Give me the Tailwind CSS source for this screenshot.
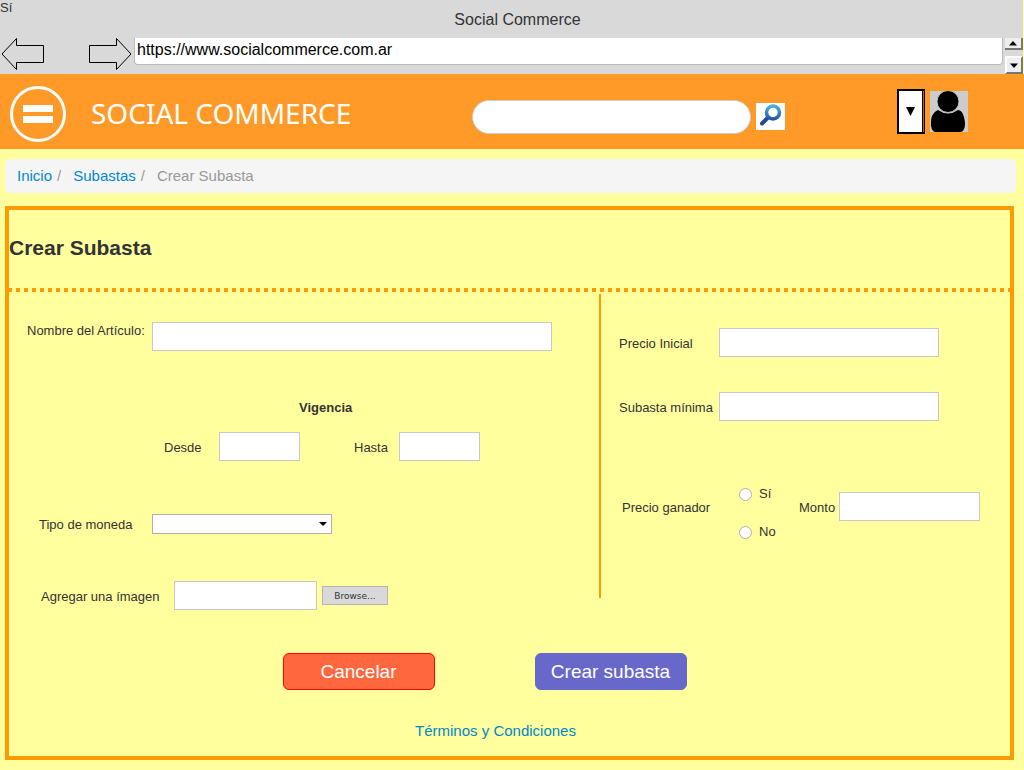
<!DOCTYPE html>
<html lang="es">
<head>
<meta charset="utf-8">
<meta name="viewport" content="width=device-width, initial-scale=1">
<title>Social Commerce</title>
<script src="https://cdn.jsdelivr.net/npm/@tailwindcss/browser@4"></script>
</head>
<body class="min-h-screen bg-[#ffff9e] font-['Liberation_Sans',Arial,sans-serif] text-[13px] leading-4 text-[#333333]">
  <!-- Browser bar -->
  <header class="mr-px h-[74px] bg-[#d9d9d9]">
    <div class="grid h-[38px] grid-cols-[1fr_auto_1fr]">
      <span>Sí</span>
      <p class="pt-2.5 pl-3 text-base leading-5">Social Commerce</p>
    </div>
    <div class="flex items-start">
      <button type="button" aria-label="Atrás" class="w-[88px] pl-px">
        <svg width="44" height="33" viewBox="0 0 44 33" fill="none" stroke="#000"><path d="M1 16 15.500 .5V7.500H42.500V24.500H15.500V31.500Z"/></svg>
      </button>
      <button type="button" aria-label="Adelante" class="w-[46px]">
        <svg width="44" height="33" viewBox="0 0 44 33" fill="none" stroke="#000"><path d="M43 16 28.500 .5V7.500H1.500V24.500H28.500V31.500Z"/></svg>
      </button>
      <input type="text" aria-label="Dirección" value="https://www.socialcommerce.com.ar" class="h-[27px] min-w-0 flex-1 rounded-b border border-t-0 border-[#bbbbbb] bg-white px-0.5 pb-0.5 text-base text-black">
      <div class="ml-0.5 flex h-9 w-[18px] flex-col justify-between">
        <button type="button" aria-label="Subir" class="flex h-3 items-center justify-center border-r-2 border-b-2 border-[#777777] bg-[#eeeeee]"><svg width="8" height="5"><path d="M0 4.500 4 0 8 4.500Z"/></svg></button>
        <button type="button" aria-label="Bajar" class="flex h-[18px] items-center justify-center border-2 border-t-white border-r-[#777777] border-b-[#777777] border-l-white bg-[#eeeeee]"><svg width="8" height="5"><path d="M0 .5 4 5 8 .5Z"/></svg></button>
      </div>
    </div>
  </header>

  <!-- Site bar -->
  <div class="flex h-[75px] items-center bg-[#ff9a28]">
    <button type="button" aria-label="Menú" class="ml-[9px] mt-1">
      <svg width="58" height="58" viewBox="0 0 58 58"><circle cx="29" cy="29" r="26.500" fill="none" stroke="#fff" stroke-width="3"/><path d="M14 20h30v7H14zM14 31h30v7H14z" fill="#fff"/></svg>
    </button>
    <div class="flex-1 pl-6 pt-0.5 font-['Comic_Sans_MS','Noto_Sans',sans-serif] text-[28px] leading-9 text-white">SOCIAL COMMERCE</div>
    <form class="mt-2.5 flex items-center gap-[5px]">
      <input type="search" aria-label="Buscar" class="h-[34px] w-[279px] rounded-full border border-[#cccccc] bg-white px-4">
      <button type="button" aria-label="Buscar" class="h-[27px] w-[29px] bg-white">
        <svg width="29" height="27" viewBox="0 0 29 27" fill="none">
          <defs><linearGradient id="lens" x1="0" y1="0" x2="0" y2="1"><stop stop-color="#45b5dd"/><stop offset="1" stop-color="#2956ad"/></linearGradient></defs>
          <path d="m12 14.500-6 6" stroke="#234a97" stroke-width="4" stroke-linecap="round"/>
          <circle cx="17" cy="9.500" r="6.500" stroke="url(#lens)" stroke-width="3.500"/>
        </svg>
      </button>
    </form>
    <div class="ml-28 mr-14 flex items-center gap-[5px]">
      <button type="button" aria-label="Opciones" class="flex h-[45px] w-7 items-center justify-center border-2 border-r border-black bg-[#b06010] pr-px"><span class="flex h-full flex-1 items-center justify-center border-r border-black bg-white"><svg width="9" height="9"><path d="M0 0H9L4.500 9Z"/></svg></span></button>
      <svg role="img" aria-label="Usuario" width="38" height="41" viewBox="0 0 38 41"><path fill="#ccc" d="M0 0h38v41H0z"/><path d="M8 19Q18 26 28 19Q32 19 34 26Q36 34 34 38Q33 41 30 41H6Q2 41 1 35Q0 22 8 19Z"/><circle cx="18" cy="10.500" r="11" stroke="#ccc"/></svg>
    </div>
  </div>

  <!-- Breadcrumb -->
  <nav aria-label="Ruta" class="ml-[5px] mr-2 mt-2.5 flex h-[34px] items-center rounded-md bg-[#f5f5f5] pl-3 text-[15px] text-[#999999]">
    <a href="#" class="text-[#0088cc]">Inicio</a><span class="pl-[5px] pr-3">/</span>
    <a href="#" class="text-[#0088cc]">Subastas</a><span class="pl-[5px] pr-3">/</span>
    <span>Crear Subasta</span>
  </nav>

  <main class="mb-2.5 ml-[5px] mr-2.5 mt-[13px] border-4 border-[#ff9a00]">
    <h1 class="pt-[26px] pb-[28px] text-[21px] font-bold leading-6">Crear Subasta</h1>
    <div class="h-1 bg-[repeating-linear-gradient(90deg,#ff9a00_0px,#ff9a00_3px,transparent_3px,transparent_7px,#ff9a00_7px,#ff9a00_8px)]"></div>
    <form>
      <div class="grid grid-cols-[590fr_411fr] pt-0.5">
        <div class="pt-7">
          <div class="flex">
            <label for="nombre" class="w-[143px] shrink-0 pl-[18px] pt-px">Nombre del Artículo:</label>
            <input id="nombre" type="text" class="h-[29px] w-[400px] border border-[#c8c8c8] bg-white px-2">
          </div>
          <fieldset class="mt-12 pl-[155px]">
            <legend class="pl-[135px] pt-px font-bold">Vigencia</legend>
            <div class="mt-4 flex items-center">
              <label for="desde" class="w-[55px] pt-0.5">Desde</label>
              <input id="desde" type="text" class="h-[29px] w-[81px] border border-[#c8c8c8] bg-white px-2">
              <label for="hasta" class="ml-[54px] w-[45px] pt-0.5">Hasta</label>
              <input id="hasta" type="text" class="h-[29px] w-[81px] border border-[#c8c8c8] bg-white px-2">
            </div>
          </fieldset>
          <div class="mt-[53px] flex items-center pl-[30px]">
            <label for="moneda" class="w-[113px] pt-0.5">Tipo de moneda</label>
            <div class="relative">
              <select id="moneda" class="block h-5 w-[180px] appearance-none border border-[#b0b0b0] bg-white px-1"><option></option></select>
              <svg class="pointer-events-none absolute right-[5px] top-2" width="8" height="4"><path d="M0 0H8L4 4Z"/></svg>
            </div>
          </div>
          <div class="mt-[47px] flex items-center pl-8">
            <label for="imagen" class="w-[133px] pt-0.5">Agregar una ímagen</label>
            <input id="imagen" type="text" class="h-[29px] w-[143px] border border-[#c8c8c8] bg-white px-2">
            <button type="button" class="ml-[5px] h-[19px] w-[66px] border border-[#b5b5b5] bg-[#d9d9d9] font-['DejaVu_Sans',sans-serif] text-[9px] leading-4">Browse...</button>
          </div>
        </div>

        <div class="h-[304px] border-l-2 border-[#ff9a00] pl-[18px] pt-[34px]">
          <div class="flex items-center">
            <label for="inicial" class="w-[100px] pt-0.5">Precio Inicial</label>
            <input id="inicial" type="text" class="h-[29px] w-[220px] border border-[#c8c8c8] bg-white px-2">
          </div>
          <div class="mt-[35px] flex items-center">
            <label for="minima" class="w-[100px] pt-0.5">Subasta mínima</label>
            <input id="minima" type="text" class="h-[29px] w-[220px] border border-[#c8c8c8] bg-white px-2">
          </div>
          <div class="mt-[52px] flex items-center">
            <span id="ganador" class="w-[120px] pl-[3px] pt-0.5">Precio ganador</span>
            <div role="radiogroup" aria-labelledby="ganador" class="flex w-[60px] flex-col gap-[22px] pt-[13px]">
              <label class="flex items-center gap-[7px]"><input type="radio" name="ganador" class="size-[13px] appearance-none rounded-full border border-[#b0b0b0] bg-white checked:border-4 checked:border-blue-600">Sí</label>
              <label class="flex items-center gap-[7px]"><input type="radio" name="ganador" class="size-[13px] appearance-none rounded-full border border-[#b0b0b0] bg-white checked:border-4 checked:border-blue-600">No</label>
            </div>
            <label for="monto" class="w-10 pt-0.5">Monto</label>
            <input id="monto" type="text" class="h-[29px] w-[141px] border border-[#c8c8c8] bg-white px-2">
          </div>
        </div>
      </div>
      <div class="mt-[43px] flex justify-center gap-[100px] pr-[50px] text-[19px] text-white">
        <button type="button" class="h-[37px] w-[152px] rounded-md border border-[#ff0000] bg-[#ff673e]">Cancelar</button>
        <button type="submit" class="h-[37px] w-[152px] rounded-md border border-[#6666cc] bg-[#6868cb]">Crear subasta</button>
      </div>
    </form>
    <p class="pt-[33px] pb-[17px] pr-7 text-center text-[15px]"><a href="#" class="text-[#0088cc]">Términos y Condiciones</a></p>
  </main>
</body>
</html>
